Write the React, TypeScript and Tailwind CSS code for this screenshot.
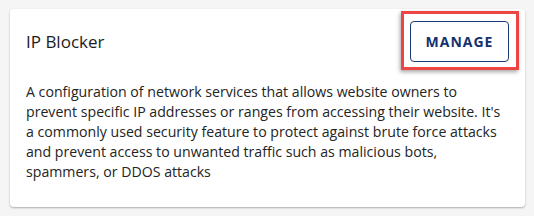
export default function App() {
  return (
    <div className="min-h-screen bg-[#f5f5f5] pt-[9px] pl-[10px] pr-[9px] font-['Open_Sans',sans-serif]">
      <div className="rounded bg-white shadow-[0_1px_2px_rgba(0,0,0,0.3)] px-4 pt-3 pb-[25px]">
        <div className="flex items-center justify-between">
          <h2 className="text-[17px] text-[#1c1c1c]">IP Blocker</h2>
          <div className="relative">
            <button className="h-[41px] w-[99px] rounded border border-[#1b3a78] text-[14px] font-bold tracking-[1px] text-[#143070]">
              MANAGE
            </button>
            <div className="pointer-events-none absolute -left-[9px] -right-[10px] -top-[10px] -bottom-[8px] border-[3px] border-[#ef4444] shadow-[-1px_2px_4px_rgba(0,0,0,0.35)]" />
          </div>
        </div>
        <p className="mt-[20px] mr-[4px] text-[14.15px] leading-[20px] text-[#242424]">
          A configuration of network services that allows website owners to prevent specific IP addresses or ranges from accessing their website. It's a commonly used security feature to protect against brute force attacks and prevent access to unwanted traffic such as malicious bots, spammers, or DDOS attacks
        </p>
      </div>
    </div>
  )
}
